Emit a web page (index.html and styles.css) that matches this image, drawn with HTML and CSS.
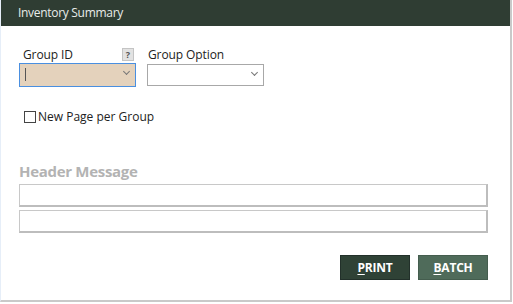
FILE: index.html
```html
<!DOCTYPE html>
<html lang="en">
<head>
  <meta charset="UTF-8">
  <title>Inventory Summary</title>
  <link rel="stylesheet" href="styles.css">
</head>
<body>

  <div class="dialog">
    <!-- Title bar -->
    <div class="titlebar">Inventory Summary</div>

    <div class="content">
      <!-- Group fields -->
      <div class="group-row">
        <div class="field field-id">
          <div class="label-row">
            <span class="label">Group ID</span>
            <span class="help">?</span>
          </div>
          <div class="select active">
            <span class="cursor"></span>
            <span class="chevron"></span>
          </div>
        </div>
        <div class="field field-option">
          <div class="label-row">
            <span class="label">Group Option</span>
          </div>
          <div class="select">
            <span class="chevron"></span>
          </div>
        </div>
      </div>

      <label class="check-row">
        <span class="checkbox"></span>
        <span>New Page per Group</span>
      </label>

      <!-- Header message -->
      <div class="section-title">Header Message</div>
      <div class="text-input"></div>
      <div class="text-input"></div>

      <div class="actions">
        <button class="btn btn-print"><u>P</u>RINT</button>
        <button class="btn btn-batch"><u>B</u>ATCH</button>
      </div>
    </div>
  </div>

</body>
</html>
```

FILE: styles.css
```css
* {
  margin: 0;
  padding: 0;
  box-sizing: border-box;
  font-family: "Open Sans", "Noto Sans", sans-serif;
}

body {
  width: 513px;
  height: 304px;
  background-color: #fff;
  overflow: hidden;
}

.dialog {
  width: 512px;
  height: 302px;
  border-right: 2px solid #c9c9c9;
  border-bottom: 2px solid #c9c9c9;
  border-left: 1px solid #e6eef8;
  background-color: #fff;
}

/* Title bar */
.titlebar {
  height: 26px;
  background-color: #2f3d33;
  color: #e8ece9;
  font-size: 12px;
  line-height: 26px;
  padding-left: 17px;
  letter-spacing: -0.3px;
}

.content {
  padding: 0 22px 0 18px;
}

/* Group fields */
.group-row {
  display: flex;
  gap: 11px;
  margin-top: 19px;
}

.field {
  width: 117px;
}

.label-row {
  display: flex;
  justify-content: space-between;
  align-items: center;
  height: 18px;
  padding-left: 4px;
  margin-bottom: 1px;
}

.field-option .label-row {
  padding-left: 1px;
}

.label {
  font-size: 12px;
  color: #222;
  letter-spacing: -0.1px;
}

.help {
  width: 12px;
  height: 13px;
  margin-right: 2px;
  background-color: #e2e2e2;
  border: 1px solid #c4c4c4;
  color: #555;
  font-size: 9px;
  font-weight: bold;
  line-height: 11px;
  text-align: center;
}

.select {
  position: relative;
  height: 22px;
  border: 1px solid #a8a8a8;
  background-color: #fff;
}

.select.active {
  height: 24px;
  margin-top: -1px;
  background-color: #e4d2bc;
  border: 1px solid #4a8fe0;
}

.cursor {
  position: absolute;
  left: 5px;
  top: 4px;
  width: 1px;
  height: 13px;
  background-color: #555;
}

.chevron {
  position: absolute;
  right: 6px;
  top: 5px;
  width: 5px;
  height: 5px;
  border-right: 1px solid #777;
  border-bottom: 1px solid #777;
  transform: rotate(45deg);
}

/* Checkbox */
.check-row {
  display: flex;
  align-items: center;
  gap: 2px;
  margin-top: 21px;
  padding-left: 5px;
  font-size: 12px;
  color: #222;
  letter-spacing: 0;
}

.checkbox {
  width: 12px;
  height: 12px;
  border: 1px solid #444;
  background-color: #fff;
}

/* Header message */
.section-title {
  margin-top: 36px;
  font-size: 15px;
  font-weight: bold;
  color: #b3b3b3;
  letter-spacing: -0.3px;
}

.text-input {
  height: 23px;
  margin-top: 3px;
  border: 2px solid #bdbdbd;
  border-width: 1px 2px 2px 1px;
  border-color: #c8c8c8 #bdbdbd #bdbdbd #c8c8c8;
}

.text-input + .text-input {
  margin-top: 3px;
}

/* Buttons */
.actions {
  display: flex;
  justify-content: flex-end;
  gap: 8px;
  margin-top: 22px;
}

.btn {
  width: 70px;
  height: 25px;
  border: 1px solid #22302a;
  color: #fff;
  font-size: 12px;
  font-weight: bold;
  letter-spacing: -0.2px;
  cursor: pointer;
}

.btn u {
  text-decoration-thickness: 1px;
  text-underline-offset: 2px;
}

.btn-print {
  background-color: #2f4236;
}

.btn-batch {
  background-color: #4f6b5a;
  border-color: #445d4e;
}
```
